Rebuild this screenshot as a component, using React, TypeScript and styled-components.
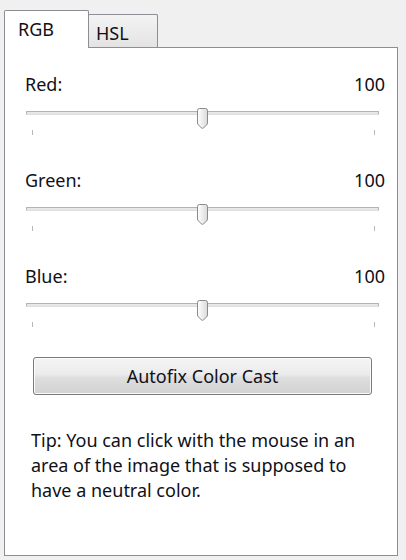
import React from 'react'
import styled, { createGlobalStyle } from 'styled-components'

const GlobalStyle = createGlobalStyle`
  html, body {
    margin: 0;
    padding: 0;
    background: #f0f0f0;
  }
  body {
    font-family: 'Noto Sans', 'Open Sans', sans-serif;
    font-size: 18px;
    color: #101018;
  }
`

const Window = styled.div`
  box-sizing: border-box;
  height: 560px;
  padding: 10px 8px 4px 4px;
  display: flex;
  flex-direction: column;
`

const TabBar = styled.div`
  display: flex;
  align-items: flex-end;
  height: 37px;
`

interface TabProps {
  $active?: boolean
}

const Tab = styled.div<TabProps>`
  box-sizing: border-box;
  position: relative;
  border: 1px solid #8c8e94;
  border-bottom: none;
  border-radius: 2px 2px 0 0;
  line-height: 1;
  ${(p) =>
    p.$active
      ? `
    width: 85px;
    height: 38px;
    margin-bottom: -1px;
    padding: 9px 0 0 13px;
    background: #ffffff;
    z-index: 1;
  `
      : `
    width: 70px;
    height: 33px;
    margin-left: -1px;
    padding: 9px 0 0 7px;
    background: linear-gradient(#f3f3f3, #e3e3e3);
  `}
`

const Panel = styled.div`
  flex: 1;
  box-sizing: border-box;
  background: #ffffff;
  border: 1px solid #8c8e94;
  padding: 24px 12px 0 20px;
  display: flex;
  flex-direction: column;
`

const LabelRow = styled.div`
  display: flex;
  justify-content: space-between;
  height: 24px;
  line-height: 24px;
`

const SliderBox = styled.div`
  position: relative;
  height: 48px;
  margin: 0 6px 24px 1px;
`

const Track = styled.div`
  box-sizing: border-box;
  margin-top: 15px;
  height: 4px;
  background: #e7e7e7;
  border: 1px solid #b4b4b4;
  border-bottom-color: #dedede;
  border-radius: 1px;
`

const Ticks = styled.div`
  display: flex;
  justify-content: space-between;
  margin-top: 15px;
  padding: 0 4px 0 6px;
`

const Tick = styled.span`
  width: 1px;
  height: 5px;
  background: #b8b8b8;
`

const Thumb = styled.svg`
  position: absolute;
  top: 12px;
  width: 11px;
  height: 21px;
  margin-left: -5.5px;
`

const Button = styled.button`
  box-sizing: border-box;
  margin: -3px 13px 0 8px;
  height: 38px;
  border: 1px solid #7a7a7a;
  border-radius: 3px;
  background: linear-gradient(#f4f4f4 0%, #ececec 45%, #dedede 55%, #d2d2d2 100%);
  box-shadow: inset 0 0 0 1px #fbfbfb;
  font-family: inherit;
  font-size: 18px;
  color: #101018;
  padding: 0;
`

const Tip = styled.p`
  margin: 33px 0 0 6px;
  line-height: 25px;
`

interface SliderProps {
  label: string
  value: number
  max: number
}

const ColorSlider: React.FunctionComponent<SliderProps> = ({ label, value, max }) => {
  const pct = (value / max) * 100
  return (
    <>
      <LabelRow>
        <span>{label}:</span>
        <span>{value}</span>
      </LabelRow>
      <SliderBox>
        <Track />
        <Ticks>
          <Tick />
          <Tick />
        </Ticks>
        <Thumb viewBox="0 0 11 21" style={{ left: `${pct}%` }}>
          <defs>
            <linearGradient id={`thumb-${label}`} x1="0" y1="0" x2="1" y2="0">
              <stop offset="0" stopColor="#ffffff" />
              <stop offset="1" stopColor="#dadada" />
            </linearGradient>
          </defs>
          <path
            d="M0.5 2.5 Q0.5 0.5 2.5 0.5 H8.5 Q10.5 0.5 10.5 2.5 V15 Q10.5 16 9.5 17 L6.5 20 Q5.5 20.8 4.5 20 L1.5 17 Q0.5 16 0.5 15 Z"
            fill={`url(#thumb-${label})`}
            stroke="#8a8a8a"
          />
        </Thumb>
      </SliderBox>
    </>
  )
}

const App: React.FunctionComponent = () => {
  return (
    <>
      <GlobalStyle />
      <Window>
        <TabBar>
          <Tab $active>RGB</Tab>
          <Tab>HSL</Tab>
        </TabBar>
        <Panel>
          <ColorSlider label="Red" value={100} max={200} />
          <ColorSlider label="Green" value={100} max={200} />
          <ColorSlider label="Blue" value={100} max={200} />
          <Button>Autofix Color Cast</Button>
          <Tip>
            Tip: You can click with the mouse in an
            <br />
            area of the image that is supposed to
            <br />
            have a neutral color.
          </Tip>
        </Panel>
      </Window>
    </>
  )
}

export default App
